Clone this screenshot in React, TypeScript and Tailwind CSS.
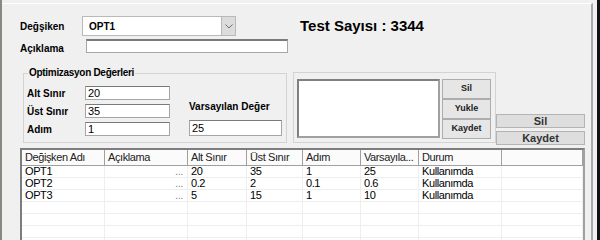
import React from 'react';

const rows = [
  { name: 'OPT1', desc: '...', alt: '20', ust: '35', adim: '1', vars: '25', durum: 'Kullanımda' },
  { name: 'OPT2', desc: '...', alt: '0.2', ust: '2', adim: '0.1', vars: '0.6', durum: 'Kullanımda' },
  { name: 'OPT3', desc: '...', alt: '5', ust: '15', adim: '1', vars: '10', durum: 'Kullanımda' },
];

const cols = [
  { title: 'Değişken Adı', w: 'w-[83px]' },
  { title: 'Açıklama', w: 'w-[83px]' },
  { title: 'Alt Sınır', w: 'w-[59px]' },
  { title: 'Üst Sınır', w: 'w-[56px]' },
  { title: 'Adım', w: 'w-[58px]' },
  { title: 'Varsayıla...', w: 'w-[58px]' },
  { title: 'Durum', w: 'w-[83px]' },
  { title: '', w: 'flex-1' },
];

const TextBox: React.FC<{ value?: string; className?: string }> = ({ value = '', className = '' }) => (
  <div
    className={`bg-white border border-[#a6a6a6] border-t-[#7a7a7a] text-[11px] leading-none font-normal text-black pl-[2px] flex items-center ${className}`}
  >
    {value}
  </div>
);

const SmallButton: React.FC<{ label: string }> = ({ label }) => (
  <div className="h-[20px] w-[49px] bg-[#e6e6e6] border border-[#adadad] flex items-center justify-center text-[9px] font-bold text-[#222]">
    {label}
  </div>
);

const WideButton: React.FC<{ label: string }> = ({ label }) => (
  <div className="h-[14px] w-[89px] bg-[#dedede] border border-[#b4b4b4] flex items-center justify-center text-[11px] font-bold text-[#333]">
    {label}
  </div>
);

export default function App() {
  return (
    <div className="w-[600px] h-[240px] bg-[#f0f0f0] flex overflow-hidden font-['Liberation_Sans',Arial,sans-serif] text-black">
      <div className="w-[2px] bg-[#8a8782]" />
      <div className="mt-[3px] w-[591px] border-t border-t-white border-r-2 border-r-[#a9a9a9] pl-[18px] pt-[12px]">
        {/* top fields */}
        <div className="flex items-start">
          <div className="flex flex-col w-[268px]">
            <div className="flex items-center h-[20px]">
              <span className="w-[62px] text-[10px] font-bold">Değşiken</span>
              <div className="w-[154px] h-[20px] bg-white border border-[#b9b9b9] flex">
                <span className="flex-1 pl-[6px] flex items-center text-[10px] font-bold">OPT1</span>
                <div className="w-[14px] bg-[#dcdcdc] border-l border-[#b9b9b9] flex items-center justify-center">
                  <svg width="8" height="5" viewBox="0 0 8 5" fill="none">
                    <path d="M0.5 0.5 L4 4 L7.5 0.5" stroke="#6d6d6d" strokeWidth="1" />
                  </svg>
                </div>
              </div>
            </div>
            <div className="flex items-center h-[14px] mt-[3px]">
              <span className="w-[66px] text-[10px] font-bold pt-[4px]">Açıklama</span>
              <TextBox className="w-[202px] h-[14px] border-t-[#6e6e6e] border-t-2" />
            </div>
          </div>
          <div className="ml-[12px] mt-[1px] text-[15px] font-bold leading-[18px]">Test Sayısı : 3344</div>
        </div>

        {/* groups */}
        <div className="flex items-start mt-[19px]">
          <div className="relative ml-[3px] mt-[1px] w-[264px] h-[70px] border border-[#d3d3d3] pl-[3px] pt-[12px] flex">
            <span className="absolute -top-[7px] left-[4px] px-[1px] bg-[#f0f0f0] text-[10px] font-bold leading-[12px] tracking-[-0.3px]">
              Optimizasyon Değerleri
            </span>
            <div className="flex flex-col gap-[4px]">
              {[
                ['Alt Sınır', '20'],
                ['Üst Sınır', '35'],
                ['Adım', '1'],
              ].map(([l, v]) => (
                <div key={l} className="flex items-center h-[14px]">
                  <span className="w-[58px] text-[10px] font-bold">{l}</span>
                  <TextBox value={v} className="w-[85px] h-[14px]" />
                </div>
              ))}
            </div>
            <div className="ml-[19px] flex flex-col">
              <span className="mt-[15px] text-[10px] font-bold leading-[12px]">Varsayılan Değer</span>
              <TextBox value="25" className="mt-[7px] w-[93px] h-[16px]" />
            </div>
          </div>

          <div className="ml-[6px] w-[203px] h-[71px] border border-[#d3d3d3] pl-[3px] pt-[6px] flex">
            <div className="w-[143px] h-[59px] bg-white border-2 border-[#a0a0a0] border-t-[#808080] border-l-[#808080]" />
            <div className="ml-[2px] flex flex-col">
              <SmallButton label="Sil" />
              <SmallButton label="Yukle" />
              <SmallButton label="Kaydet" />
            </div>
          </div>

          <div className="mt-[42px] flex flex-col gap-[3px]">
            <WideButton label="Sil" />
            <WideButton label="Kaydet" />
          </div>
        </div>

        {/* grid */}
        <div className="mt-[3px] w-[565px] h-[120px] bg-white border-2 border-[#a0a0a0] border-t-[#7d7d7d] border-l-[#7d7d7d] text-[11px] tracking-[-0.4px]">
          <div className="flex h-[16px] border-b border-[#a0a0a0] bg-[#fbfbfb]">
            {cols.map((c, i) => (
              <div
                key={i}
                className={`${c.w} border-r border-[#a0a0a0] pl-[3px] flex items-center leading-none text-[#222]`}
              >
                {c.title}
              </div>
            ))}
          </div>
          {[...rows, null, null, null, null, null, null].map((r, ri) => (
            <div key={ri} className="flex h-[12px] border-b border-[#eeeeee]">
              {cols.map((c, ci) => {
                const vals = r ? [r.name, r.desc, r.alt, r.ust, r.adim, r.vars, r.durum, ''] : [];
                const v = vals[ci] ?? '';
                return (
                  <div
                    key={ci}
                    className={`${c.w} border-r border-[#eeeeee] flex items-center leading-none ${
                      ci === 1 ? 'justify-end pr-[4px] text-[#888]' : 'pl-[3px]'
                    }`}
                  >
                    {v}
                  </div>
                );
              })}
            </div>
          ))}
        </div>
      </div>
      <div className="w-[4px]" />
      <div className="w-[3px] bg-[#111]" />
    </div>
  );
}
